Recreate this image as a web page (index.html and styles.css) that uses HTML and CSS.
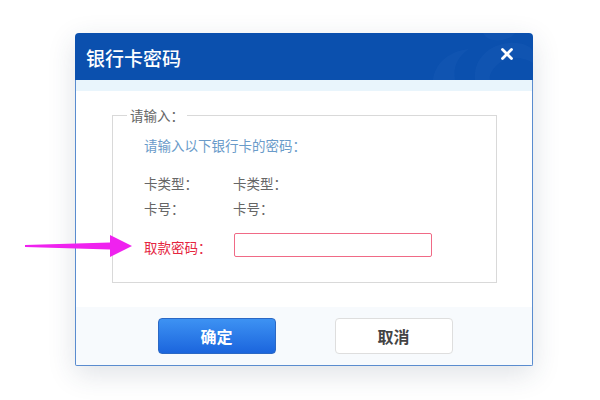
FILE: index.html
```html
<!DOCTYPE html>
<html lang="zh-CN">
	<head>
		<meta charset="utf-8" />
		<title>银行卡密码</title>
		<meta name="viewport" content="width=device-width, initial-scale=1" />
		<link rel="stylesheet" href="styles.css">
	</head>
	<body>
		<div class="stage">
			<div class="dialog">
				<div class="dialog-head">
					<svg class="head-pattern" width="120" height="47" viewBox="0 0 120 47">
						<path d="M20 47 C22 30 36 18 56 16 C44 24 40 34 42 47 Z" />
						<path d="M62 47 C60 28 74 12 96 10 C110 9 118 14 120 18 L120 30 C108 22 92 24 84 32 C78 38 76 43 77 47 Z" />
						<path d="M70 0 C74 8 86 10 98 4 L102 0 Z" />
					</svg>
					<span class="dialog-title">银行卡密码</span>
					<svg class="dialog-close" width="12" height="12" viewBox="0 0 12 12">
						<path d="M1.5 1.5 L10.5 10.5 M10.5 1.5 L1.5 10.5" />
					</svg>
				</div>
				<div class="dialog-strip"></div>
				<div class="dialog-body">
					<fieldset class="box">
						<legend>请输入：</legend>
						<p class="hint">请输入以下银行卡的密码：</p>
						<div class="info">
							<div class="info-row"><span class="info-label">卡类型：</span><span>卡类型：</span></div>
							<div class="info-row"><span class="info-label">卡号：</span><span>卡号：</span></div>
						</div>
						<div class="pwd-row">
							<label class="pwd-label" for="pwd">取款密码：</label>
							<input class="pwd-input" id="pwd" type="password">
						</div>
					</fieldset>
				</div>
				<div class="dialog-foot">
					<button class="btn btn-ok">确定</button>
					<button class="btn btn-cancel">取消</button>
				</div>
			</div>

			<!-- annotation arrow pointing at the password field -->
			<svg class="pointer" width="108" height="24" viewBox="0 0 108 24">
				<polygon points="0,11 85,8.5 85,1 107,12 85,23 85,15.5 0,13" />
			</svg>
		</div>
	</body>
</html>
```

FILE: styles.css
```css
* { box-sizing: border-box; }

html,
body {
	margin: 0;
	height: 100%;
	background: #fff;
	font: 13.5px/20px "Noto Sans CJK SC", "Noto Sans", sans-serif;
	color: #555;
}

.stage {
	position: relative;
	padding: 33px 0 0 75px;
}

.dialog {
	width: 458px;
	border-radius: 4px 4px 2px 2px;
	box-shadow: 0 8px 28px rgba(40, 60, 90, 0.15);
}

.dialog-head {
	position: relative;
	display: flex;
	justify-content: space-between;
	align-items: flex-start;
	height: 47px;
	padding: 0 20px 0 11px;
	background: #0b50ae;
	border-radius: 4px 4px 0 0;
	overflow: hidden;
}

.head-pattern {
	position: absolute;
	right: 0;
	top: 0;
}

.head-pattern path {
	fill: #1a5db8;
	opacity: 0.35;
}

.dialog-title {
	position: relative;
	margin-top: 12px;
	font-size: 19px;
	line-height: 26px;
	font-weight: 500;
	color: #fff;
}

.dialog-close {
	position: relative;
	margin-top: 15px;
}

.dialog-close path {
	stroke: #fff;
	stroke-width: 2.8;
	stroke-linecap: round;
	fill: none;
}

.dialog-strip {
	height: 11px;
	background: #e9f5fc;
	border-left: 1px solid #5a8ccf;
	border-right: 1px solid #5a8ccf;
}

.dialog-body {
	padding: 16px 0 24px 36px;
	background: #fff;
	border-left: 1px solid #5a8ccf;
	border-right: 1px solid #5a8ccf;
}

.box {
	width: 385px;
	margin: 0;
	padding: 0 0 25px 31px;
	border: 1px solid #d9d9d9;
}

.box legend {
	margin-left: -17px;
	padding: 0 3px;
	font-size: 13.5px;
	line-height: 16px;
	color: #666;
}

.hint {
	margin: 12px 0 0;
	color: #6a9bc9;
}

.info {
	margin-top: 15.5px;
}

.info-row {
	display: flex;
	line-height: 25px;
	color: #666;
}

.info-label {
	width: 89px;
}

.pwd-row {
	display: flex;
	align-items: center;
	margin-top: 12.5px;
}

.pwd-label {
	width: 90px;
	padding-top: 3px;
	color: #e5263f;
}

.pwd-input {
	width: 198px;
	height: 24px;
	margin: 0;
	border: 1px solid #f06a86;
	border-radius: 2px;
	outline: none;
}

.dialog-foot {
	display: flex;
	justify-content: center;
	gap: 59px;
	padding: 11px 0 11px 2px;
	background: #f7fafd;
	border: 1px solid #5a8ccf;
	border-top: none;
	border-radius: 0 0 2px 2px;
}

.btn {
	width: 118px;
	height: 36px;
	font: bold 16px/20px "Noto Sans CJK SC", "Noto Sans", sans-serif;
	border-radius: 4px;
	cursor: pointer;
}

.btn-ok {
	color: #fff;
	background: linear-gradient(#3d92f3, #1b65dd);
	border: 1px solid #2b68c4;
}

.btn-cancel {
	color: #444;
	background: #fff;
	border: 1px solid #dedede;
}

.pointer {
	position: absolute;
	left: 25px;
	top: 234px;
}

.pointer polygon {
	fill: #ef22ef;
}
```
